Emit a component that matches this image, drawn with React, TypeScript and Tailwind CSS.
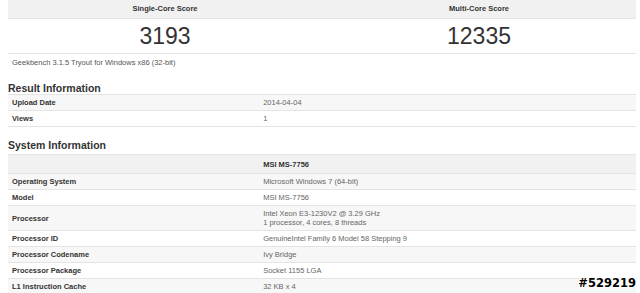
import React from 'react';

const font = { fontFamily: '"Liberation Sans", Arial, sans-serif' };

interface Row {
  label: string;
  value: React.ReactNode;
}

const resultRows: Row[] = [
  { label: 'Upload Date', value: '2014-04-04' },
  { label: 'Views', value: '1' },
];

const systemRows: Row[] = [
  { label: 'Operating System', value: 'Microsoft Windows 7 (64-bit)' },
  { label: 'Model', value: 'MSI MS-7756' },
  {
    label: 'Processor',
    value: (
      <>
        <div>Intel Xeon E3-1230V2 @ 3.29 GHz</div>
        <div>1 processor, 4 cores, 8 threads</div>
      </>
    ),
  },
  { label: 'Processor ID', value: 'GenuineIntel Family 6 Model 58 Stepping 9' },
  { label: 'Processor Codename', value: 'Ivy Bridge' },
  { label: 'Processor Package', value: 'Socket 1155 LGA' },
  { label: 'L1 Instruction Cache', value: '32 KB x 4' },
];

const InfoTable = ({ rows, header }: { rows: Row[]; header?: string }) => (
  <div className="border-b border-[#e4e4e4]">
    {header && (
      <div className="flex h-[19px] items-center bg-[#f1f1f1] border-t border-[#e4e4e4]">
        <div className="w-[40%]" />
        <div className="px-[4px] text-[7.5px] font-bold text-[#333]">{header}</div>
      </div>
    )}
    {rows.map((r, i) => (
      <div
        key={r.label}
        className={`flex items-center min-h-[16px] py-[3px] border-t border-[#e4e4e4] ${
          i % 2 === 0 ? 'bg-[#f7f7f7]' : 'bg-white'
        }`}
      >
        <div className="w-[40%] px-[4px] text-[7.5px] leading-[9px] font-bold text-[#333]">{r.label}</div>
        <div className="px-[4px] text-[7.5px] leading-[9px] text-[#666]">{r.value}</div>
      </div>
    ))}
  </div>
);

export default function App() {
  return (
    <div className="relative w-[640px] h-[293px] overflow-hidden bg-white" style={font}>
      <div className="ml-[8px] w-[628px]">
        <div className="flex h-[19px] bg-[#f1f1f1] border-b border-[#e4e4e4]">
          <div className="flex-1 flex items-center justify-center text-[7.5px] font-bold text-[#333]">Single-Core Score</div>
          <div className="flex-1 flex items-center justify-center text-[7.5px] font-bold text-[#333]">Multi-Core Score</div>
        </div>
        <div className="flex h-[35px] border-b border-[#e4e4e4]">
          <div className="flex-1 flex items-center justify-center text-[23px] text-[#333]">3193</div>
          <div className="flex-1 flex items-center justify-center text-[23px] text-[#333]">12335</div>
        </div>
        <div className="px-[4px] pt-[3px] text-[7.5px] text-[#555]">Geekbench 3.1.5 Tryout for Windows x86 (32-bit)</div>

        <h2 className="mt-[14px] mb-0 text-[10.5px] leading-[12px] font-bold text-[#333]">Result Information</h2>
        <InfoTable rows={resultRows} />

        <h2 className="mt-[12px] mb-[3px] text-[10.5px] leading-[12px] font-bold text-[#333]">System Information</h2>
        <InfoTable rows={systemRows} header="MSI MS-7756" />
      </div>

      <div
        className="absolute right-[4px] bottom-[3px] text-[11.5px] leading-[13px] font-bold text-black"
        style={{
          fontFamily: '"DejaVu Sans", sans-serif',
          textShadow:
            '1px 0 0 #fff, -1px 0 0 #fff, 0 1px 0 #fff, 0 -1px 0 #fff, 1px 1px 0 #fff, -1px -1px 0 #fff, 1px -1px 0 #fff, -1px 1px 0 #fff',
        }}
      >
        #529219
      </div>
    </div>
  );
}
